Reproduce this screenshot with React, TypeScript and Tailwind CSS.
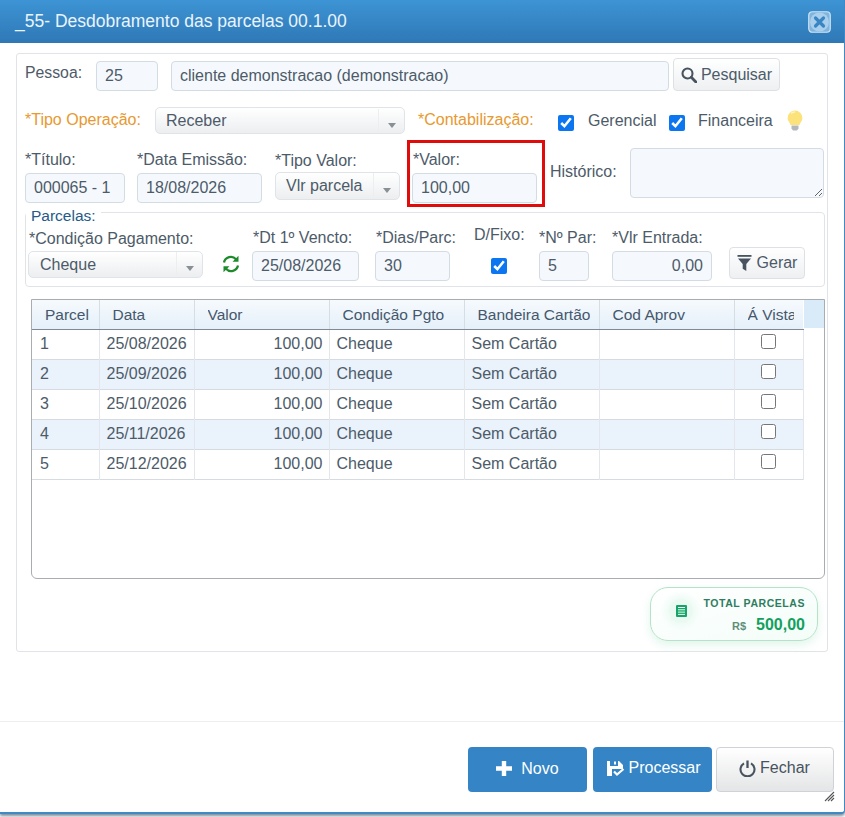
const parcelas = [
  { n: '1', data: '25/08/2026' },
  { n: '2', data: '25/09/2026' },
  { n: '3', data: '25/10/2026' },
  { n: '4', data: '25/11/2026' },
  { n: '5', data: '25/12/2026' },
];

const inputCls =
  'h-[30px] rounded-[4px] border border-[#d3dbe3] bg-[#f5f9fd] px-[8px] text-[16px] text-[#4d5b69] outline-none';

const Field = ({ value, className }: { value: string; className: string }) => (
  <input readOnly value={value} className={`${inputCls} ${className}`} />
);

const SelectBox = ({ value, className }: { value: string; className: string }) => (
  <div
    className={`flex items-center rounded-[5px] border border-[#dfe4e9] bg-gradient-to-b from-white to-[#eceef0] text-[16px] text-[#4d5b69] ${className}`}
  >
    <span className="flex-1">{value}</span>
    <span className="flex h-full w-[26px] items-center justify-center border-l border-[#eceef0]">
      <span className="mt-[8px] h-0 w-0 border-x-[4px] border-t-[5px] border-x-transparent border-t-[#8a8f94]" />
    </span>
  </div>
);

const Check = ({ className = '' }: { className?: string }) => (
  <input type="checkbox" readOnly checked className={`h-[16px] w-[16px] accent-[#0b76ef] ${className}`} />
);

const CloseIcon = () => (
  <svg width="23" height="22" viewBox="0 0 23 22">
    <rect x="0.75" y="0.75" width="21.5" height="20.5" rx="3.5" fill="#7fb4de" stroke="#cfe4f5" strokeWidth="1.2" />
    <circle cx="11.5" cy="11" r="9.5" fill="#a9cfec" />
    <path d="M7.5 7l8 8M15.5 7l-8 8" stroke="#3a86c4" strokeWidth="3.2" strokeLinecap="round" />
  </svg>
);

const SearchIcon = () => (
  <svg width="16" height="16" viewBox="0 0 16 16" fill="none" stroke="#47535f">
    <circle cx="6.5" cy="6.5" r="5" strokeWidth="2.1" />
    <path d="M10.3 10.3l4.6 4.6" strokeWidth="2.8" strokeLinecap="round" />
  </svg>
);

const BulbIcon = () => (
  <svg width="16" height="21" viewBox="0 0 16 21">
    <path d="M8 0.5a7.4 7.4 0 0 0-7.4 7.4c0 3 2.3 4.6 3 7.1h8.8c.7-2.500 3-4.100 3-7.100A7.400 7.400 0 0 0 8 0.500z" fill="#fbe27a" />
    <path d="M4 3.500a5 5 0 0 1 4-1.500" stroke="#fff6c4" strokeWidth="1.500" fill="none" />
    <path d="M4.500 15.500h7v3l-1.500 2h-4l-1.500-2z" fill="#b4b8bc" />
  </svg>
);

const RefreshIcon = () => (
  <svg width="18" height="18" viewBox="0 0 18 18" fill="none" stroke="#1d8a2c" strokeWidth="2.300">
    <path d="M2 7.500a7 7 0 0 1 12-3.300" />
    <path d="M16 10.500a7 7 0 0 1-12 3.300" />
    <path d="M16.500 0.800v6h-6z" fill="#1d8a2c" stroke="none" />
    <path d="M1.500 17.200v-6h6z" fill="#1d8a2c" stroke="none" />
  </svg>
);

const FilterIcon = () => (
  <svg width="15" height="16" viewBox="0 0 15 16" fill="#47535f">
    <rect x="0.500" y="0" width="14" height="1.800" />
    <path d="M1 3.500h13l-4.700 5.500v7l-3.600-2.200v-4.800z" />
  </svg>
);

const SaveIcon = () => (
  <svg width="18" height="15" viewBox="0 0 18 15" fill="#fff">
    <path d="M0 0h3v5h8v-5h1l4 4v4h-11v7h-5z" />
    <rect x="7" y="0.500" width="2" height="3" />
    <path d="M7 10.500l3 3 6.500-5.500" fill="none" stroke="#fff" strokeWidth="2.200" />
  </svg>
);

const PowerIcon = () => (
  <svg width="17" height="17" viewBox="0 0 17 17" fill="none" stroke="#47535f" strokeWidth="2.100">
    <path d="M5 3.300a7 7 0 1 0 7 0" />
    <path d="M8.500 0.500v7.500" strokeWidth="2.300" />
  </svg>
);

const ListIcon = () => (
  <svg width="11" height="12" viewBox="0 0 11 12">
    <rect width="11" height="12" rx="1" fill="#17a468" />
    <path d="M2 2.500h7M2 4.800h7M2 7.100h7M2 9.400h7" stroke="#e9fbf2" strokeWidth="1" />
  </svg>
);

const heads = ['Parcel', 'Data', 'Valor', 'Condição Pgto', 'Bandeira Cartão', 'Cod Aprov', 'Á Vista'];

export default function App() {
  return (
    <div className="h-[817px] w-[845px] overflow-hidden bg-white font-['Liberation_Sans',Arial,sans-serif]">
      <div className="relative flex h-[814px] w-[845px] flex-col rounded-br-[4px] border-r border-b-[2px] border-[#3f8ac4] bg-white shadow-[0_2px_3px_rgba(70,90,110,0.7)]">
        <header className="flex h-[43px] shrink-0 items-center justify-between bg-gradient-to-b from-[#3d94d4] to-[#2f78b6] pl-[15px] pr-[13px]">
          <h1 className="text-[17.500px] text-[#eaf4fc]">_55- Desdobramento das parcelas 00.1.00</h1>
          <CloseIcon />
        </header>

        <main className="ml-[16px] mt-[10px] h-[599px] w-[812px] shrink-0 rounded-[3px] border border-[#e0e4e8] text-[#4d5b69]">
          {/* Pessoa */}
          <div className="ml-[8px] mt-[4px] flex h-[33px] items-start text-[16px]">
            <span className="mt-[3px] w-[71px] text-[15.800px]">Pessoa:</span>
            <Field value="25" className="mt-[3px] w-[62px]" />
            <Field value="cliente demonstracao (demonstracao)" className="ml-[13px] mt-[3px] w-[498px]" />
            <button className="ml-[4px] flex h-[33px] w-[107px] items-center justify-center gap-[4px] rounded-[4px] border border-[#dde1e5] bg-gradient-to-b from-white to-[#eef0f2]">
              <SearchIcon />
              Pesquisar
            </button>
          </div>

          {/* Tipo operacao */}
          <div className="ml-[8px] mt-[16px] flex h-[27px] items-center text-[16px]">
            <span className="mb-[2px] w-[130px] text-[#e8992f]">*Tipo Operação:</span>
            <SelectBox value="Receber" className="h-[27px] w-[250px] pl-[10px] pt-[1px]" />
            <span className="mb-[2px] ml-[13px] w-[140px] text-[#e8992f]">*Contabilização:</span>
            <Check className="mt-[5px]" />
            <span className="ml-[14px] w-[81px]">Gerencial</span>
            <Check className="mt-[5px]" />
            <span className="ml-[13px] w-[89px]">Financeira</span>
            <BulbIcon />
          </div>

          {/* Titulo / valor */}
          <div className="ml-[8px] mt-[6px] flex h-[67px] items-start text-[16px]">
            <div className="flex w-[112px] flex-col pt-[8px]">
              <span className="h-[25px]">*Título:</span>
              <Field value="000065 - 1" className="w-[100px]" />
            </div>
            <div className="flex w-[138px] flex-col pt-[8px]">
              <span className="h-[25px]">*Data Emissão:</span>
              <Field value="18/08/2026" className="w-[125px]" />
            </div>
            <div className="flex w-[132px] flex-col pt-[9px]">
              <span className="h-[23px]">*Tipo Valor:</span>
              <SelectBox value="Vlr parcela" className="h-[28px] w-[125px] pl-[10px]" />
            </div>
            <div className="flex h-[67px] w-[138px] flex-col border-[3px] border-[#e00b0b] pl-[3px] pt-[5px]">
              <span className="h-[25px]">*Valor:</span>
              <Field value="100,00" className="-ml-px w-[125px]" />
            </div>
            <span className="ml-[5px] mt-[20px] w-[80px]">Histórico:</span>
            <textarea readOnly className="mt-[8px] h-[50px] w-[194px] rounded-[4px] border border-[#d3dbe3] bg-[#f5f9fd]" />
          </div>

          {/* Parcelas */}
          <section className="relative ml-[8px] mt-[5px] flex h-[75px] w-[800px] items-start rounded-[4px] border border-[#e0e4e8] text-[16px]">
            <span className="absolute -top-[9px] left-0 bg-white px-[5px] text-[15.500px] text-[#255a88]">Parcelas:</span>
            <div className="ml-[2px] flex w-[224px] flex-col pt-[14px]">
              <span className="h-[24px] pl-px">*Condição Pagamento:</span>
              <SelectBox value="Cheque" className="h-[27px] w-[175px] pl-[11px]" />
            </div>
            <div className="flex w-[123px] flex-col pt-[13px]">
              <span className="h-[25px] pl-px">*Dt 1º Vencto:</span>
              <Field value="25/08/2026" className="w-[107px]" />
            </div>
            <div className="flex w-[99px] flex-col pt-[13px]">
              <span className="h-[25px] pl-px">*Dias/Parc:</span>
              <Field value="30" className="w-[75px]" />
            </div>
            <div className="flex w-[65px] flex-col pt-[10px]">
              <span className="h-[35px]">D/Fixo:</span>
              <Check className="ml-[17px]" />
            </div>
            <div className="flex w-[73px] flex-col pt-[13px]">
              <span className="h-[25px]">*Nº Par:</span>
              <Field value="5" className="w-[50px]" />
            </div>
            <div className="flex w-[117px] flex-col pt-[13px]">
              <span className="h-[25px]">*Vlr Entrada:</span>
              <Field value="0,00" className="w-[100px] text-right" />
            </div>
            <button className="mt-[34px] flex h-[32px] w-[76px] items-center justify-center gap-[5px] rounded-[4px] border border-[#dde1e5] bg-gradient-to-b from-white to-[#eef0f2]">
              <FilterIcon />
              Gerar
            </button>
            <span className="absolute left-[196px] top-[42px]">
              <RefreshIcon />
            </span>
          </section>

          {/* Grade */}
          <div className="ml-[14px] mt-[12px] flex h-[280px] w-[794px] items-start overflow-hidden rounded-b-[6px] border border-[#a9adb1] text-[16px]">
            <table className="w-[771px] shrink-0 table-fixed border-collapse">
              <colgroup>
                <col className="w-[67px]" />
                <col className="w-[95px]" />
                <col className="w-[135px]" />
                <col className="w-[135px]" />
                <col className="w-[135px]" />
                <col className="w-[135px]" />
                <col className="w-[69px]" />
              </colgroup>
              <thead>
                <tr className="h-[29px] bg-gradient-to-b from-[#f6fafd] to-[#e5f0fa]">
                  {heads.map((h) => (
                    <th
                      key={h}
                      className="border-b border-l border-b-[#7f8a95] border-l-[#d5dde5] pl-[13px] pr-[9px] text-left text-[15.500px] font-normal text-[#45586c] first:border-l-0"
                    >
                      <div className="overflow-hidden whitespace-nowrap">{h}</div>
                    </th>
                  ))}
                </tr>
              </thead>
              <tbody>
                {parcelas.map((p, i) => (
                  <tr key={p.n} className={`h-[30px] border-b border-[#d5dbe1] ${i % 2 === 1 ? 'bg-[#eaf2fb]' : 'bg-white'}`}>
                    <td className="px-[8px]">{p.n}</td>
                    <td className="border-l border-[#e3e7eb] px-[7px]">{p.data}</td>
                    <td className="border-l border-[#e3e7eb] px-[6px] text-right">100,00</td>
                    <td className="border-l border-[#e3e7eb] px-[7px]">Cheque</td>
                    <td className="border-l border-[#e3e7eb] px-[7px]">Sem Cartão</td>
                    <td className="border-l border-[#e3e7eb]" />
                    <td className="border-x border-[#e3e7eb] text-center">
                      <input type="checkbox" readOnly className="mb-[6px] h-[15px] w-[15px] align-middle" />
                    </td>
                  </tr>
                ))}
              </tbody>
            </table>
            <div className="h-[28px] flex-1 bg-[#d9ebf9]" />
          </div>

          {/* Total */}
          <div className="ml-[633px] mt-[8px] flex h-[54px] w-[168px] items-center rounded-[18px] border border-[#b5e2c8] bg-gradient-to-br from-white to-[#f3fdf8] shadow-[0_4px_10px_rgba(40,190,120,0.14)]">
            <span className="mb-[7px] ml-[18px] flex h-[24px] w-[24px] items-center justify-center rounded-full bg-[#eafaf2] shadow-[0_0_6px_4px_#eefbf5]">
              <ListIcon />
            </span>
            <div className="ml-[10px] mt-[5px] flex w-[102px] flex-col items-end">
              <span className="whitespace-nowrap text-[10.500px] font-bold tracking-[0.55px] text-[#2e7d5f]">TOTAL PARCELAS</span>
              <div className="mt-[1px] flex items-baseline gap-[10px]">
                <span className="text-[11px] font-bold text-[#5f8f7a]">R$</span>
                <span className="text-[16px] font-bold text-[#12a05f]">500,00</span>
              </div>
            </div>
          </div>
        </main>

        <footer className="mt-[69px] flex h-[90px] w-[844px] items-start justify-end border-t border-[#eceef0] pr-[10px] pt-[25px] text-[16px]">
          <button className="flex h-[45px] w-[119px] items-center justify-center gap-[9px] rounded-[4px] bg-[#3585c6] pb-[2px] text-white">
            <svg width="16" height="15" viewBox="0 0 16 15" fill="#fff">
              <path d="M5.800 0h4.400v5.300h5.800v4.400h-5.800v5.300h-4.400v-5.300h-5.800v-4.400h5.800z" />
            </svg>
            Novo
          </button>
          <button className="ml-[6px] flex h-[45px] w-[119px] items-center justify-center gap-[3px] rounded-[4px] bg-[#3585c6] pb-[3px] pl-[3px] text-white">
            <SaveIcon />
            Processar
          </button>
          <button className="ml-[4px] flex h-[45px] w-[118px] items-center justify-center gap-[4px] rounded-[4px] border border-[#cfd3d7] bg-gradient-to-b from-white to-[#e4e5e6] pb-[3px] pr-[1px] text-[#47535f]">
            <PowerIcon />
            Fechar
          </button>
        </footer>

        <svg className="absolute bottom-[10px] right-[9px]" width="11" height="11" viewBox="0 0 11 11" stroke="#555" strokeWidth="1.100">
          <path d="M1 10L10 1M4 10l6-6M7 10l3-3" />
        </svg>
      </div>
    </div>
  );
}
